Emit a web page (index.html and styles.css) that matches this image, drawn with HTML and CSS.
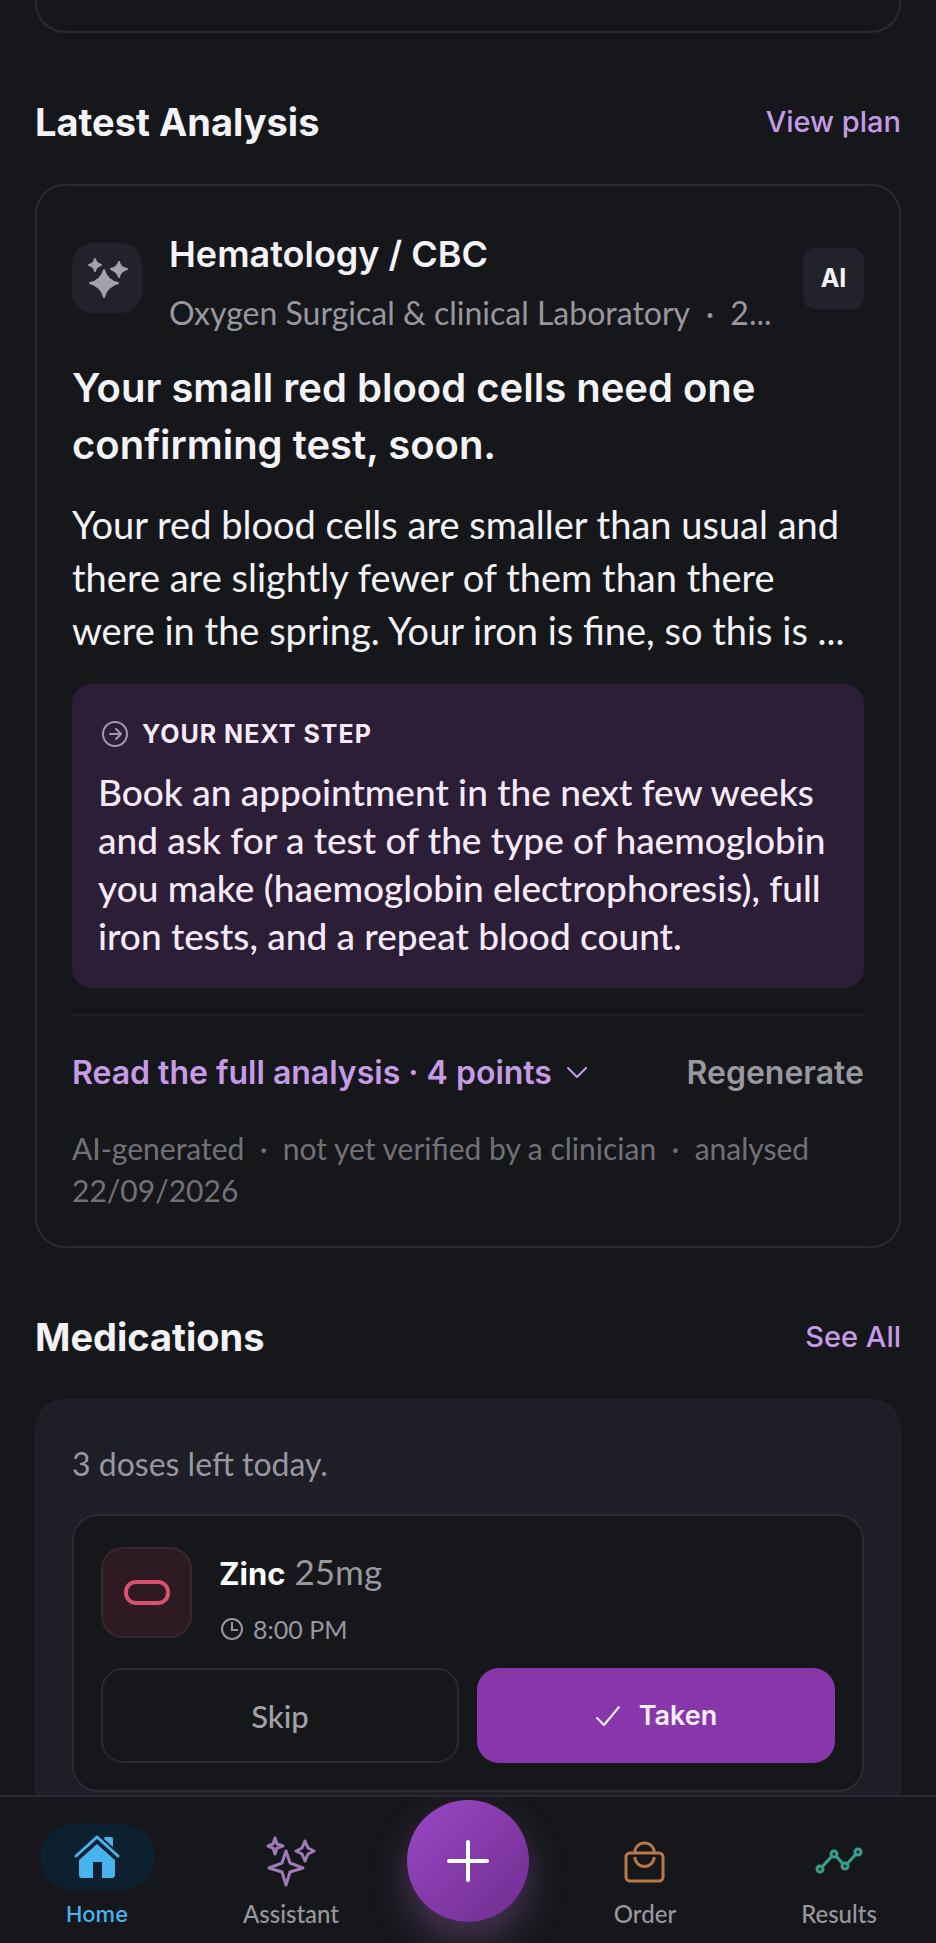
FILE: index.html
```html
<!DOCTYPE html>
<html lang="en">
<head>
    <meta charset="UTF-8">
    <meta name="viewport" content="width=device-width, initial-scale=1.0">
    <title>Home</title>
    <link rel="stylesheet" href="styles.css">
</head>
<body>

<main class="page">
    <div class="card card-end"></div>

    <div class="section-head">
        <h2>Latest Analysis</h2>
        <a href="#plan">View plan</a>
    </div>

    <article class="card">
        <div class="report-head">
            <div class="report-icon">
                <svg width="42" height="42" viewBox="0 0 42 42" fill="#a3a2ac" stroke="#a3a2ac" stroke-width="2" stroke-linejoin="round">
                    <path d="M18 13 Q21 24 32 26 Q21 29 18 40 Q15 29 4 26 Q15 24 18 13 Z"/>
                    <path d="M9 2 Q10 7 15 8 Q10 9 9 14 Q8 9 3 8 Q8 7 9 2 Z"/>
                    <path d="M33 5 Q34 11 41 12 Q34 14 33 20 Q31 14 25 12 Q31 11 33 5 Z"/>
                </svg>
            </div>
            <div class="report-title">
                <h3>Hematology / CBC</h3>
                <p>Oxygen Surgical &amp; clinical Laboratory &nbsp;·&nbsp; 2...</p>
            </div>
            <span class="ai-badge">AI</span>
        </div>

        <h4 class="headline">Your small red blood cells need one confirming test, soon.</h4>
        <p class="summary">Your red blood cells are smaller than usual and there are slightly fewer of them than there were in the spring. Your iron is fine, so this is ...</p>

        <div class="next-step">
            <div class="next-label">
                <svg width="34" height="34" viewBox="0 0 34 34" fill="none" stroke="#a893b3" stroke-width="2" stroke-linecap="round" stroke-linejoin="round">
                    <circle cx="17" cy="17" r="12"/>
                    <path d="M12 17 H22 M18 12 L23 17 L18 22"/>
                </svg>
                <span>YOUR NEXT STEP</span>
            </div>
            <p>Book an appointment in the next few weeks and ask for a test of the type of haemoglobin you make (haemoglobin electrophoresis), full iron tests, and a repeat blood count.</p>
        </div>

        <div class="report-actions">
            <button class="text-button">
                Read the full analysis · 4 points
                <svg width="22" height="14" viewBox="0 0 22 14" fill="none" stroke="currentColor" stroke-width="2" stroke-linecap="round" stroke-linejoin="round"><path d="M2 2 L11 11 L20 2"/></svg>
            </button>
            <button class="text-button muted">Regenerate</button>
        </div>
        <p class="footnote">AI-generated &nbsp;·&nbsp; not yet verified by a clinician &nbsp;·&nbsp; analysed 22/09/2026</p>
    </article>

    <div class="section-head">
        <h2>Medications</h2>
        <a href="#medications">See All</a>
    </div>

    <section class="card med-card">
        <p class="doses">3 doses left today.</p>
        <div class="dose">
            <div class="dose-info">
                <div class="pill-icon">
                    <svg width="46" height="26" viewBox="0 0 46 26" fill="none" stroke="#d9526f" stroke-width="4"><rect x="2" y="2" width="42" height="21" rx="10"/></svg>
                </div>
                <div class="dose-text">
                    <p class="dose-name"><strong>Zinc</strong> 25mg</p>
                    <p class="dose-time">
                        <svg width="26" height="26" viewBox="0 0 26 26" fill="none" stroke="currentColor" stroke-width="2"><circle cx="13" cy="13" r="10"/><path d="M13 6 V14 H19"/></svg>
                        8:00 PM
                    </p>
                </div>
            </div>
            <div class="dose-actions">
                <button class="skip">Skip</button>
                <button class="taken">
                    <svg width="26" height="22" viewBox="0 0 26 22" fill="none" stroke="currentColor" stroke-width="2" stroke-linecap="round" stroke-linejoin="round"><path d="M2 13 L9 20 L24 2"/></svg>
                    Taken
                </button>
            </div>
        </div>
    </section>
</main>

<nav class="tab-bar">
    <a href="#home" class="tab active">
        <span class="tab-icon">
            <svg width="48" height="46" viewBox="0 0 48 46">
                <path d="M31 5 a2 2 0 0 1 2-2 h5 a2 2 0 0 1 2 2 V18 L31 10 Z" fill="currentColor"/>
                <path d="M24 10 L42 26 V41 a3 3 0 0 1-3 3 H29 V28 H20 V44 H9 a3 3 0 0 1-3-3 V26 Z" fill="currentColor"/>
                <path d="M3 23 L24 4 L45 23" fill="none" stroke="#0d2030" stroke-width="8"/>
                <path d="M3 22 L24 3 L45 22" fill="none" stroke="currentColor" stroke-width="3" stroke-linecap="round" stroke-linejoin="round"/>
            </svg>
        </span>
        Home
    </a>
    <a href="#assistant" class="tab">
        <span class="tab-icon">
            <svg width="50" height="52" viewBox="0 0 50 52" fill="none" stroke="#a079b8" stroke-width="3" stroke-linejoin="round">
                <path d="M20 16 L24 28 L37 33 L24 37 L20 50 L16 37 L3 33 L16 28 Z"/>
                <path d="M9 3 L11 9 L17 11 L11 13 L9 19 L7 13 L2 11 L7 9 Z"/>
                <path d="M39 6 L42 13 L48 16 L42 19 L39 26 L36 19 L30 16 L36 13 Z"/>
            </svg>
        </span>
        Assistant
    </a>
    <button class="add" aria-label="Add">
        <svg width="44" height="44" viewBox="0 0 44 44" fill="none" stroke="#fff" stroke-width="4" stroke-linecap="round"><path d="M22 3 V41 M3 22 H41"/></svg>
    </button>
    <a href="#order" class="tab">
        <span class="tab-icon">
            <svg width="42" height="46" viewBox="0 0 42 46" fill="none" stroke="#b97a48" stroke-width="3">
                <rect x="2" y="15" width="37" height="28" rx="4"/>
                <path d="M11 15 V12 a10 10 0 0 1 19 0 V15 M11 19 V21 a10 11 0 0 0 19 0 V19"/>
            </svg>
        </span>
        Order
    </a>
    <a href="#results" class="tab">
        <span class="tab-icon">
            <svg width="48" height="30" viewBox="0 0 48 30" fill="none" stroke="#35a08c" stroke-width="3">
                <path d="M7 21 L17 10 M21 10 L28 18 M32 18 L41 8"/>
                <circle cx="5" cy="23" r="3"/><circle cx="19" cy="8" r="3"/><circle cx="30" cy="20" r="3"/><circle cx="43" cy="6" r="3"/>
            </svg>
        </span>
        Results
    </a>
</nav>

</body>
</html>
```

FILE: styles.css
```css
* {
    box-sizing: border-box;
}
body {
    margin: 0;
    background-color: #16171b;
    color: #f4f4f8;
    font-family: Lato, "Liberation Sans", sans-serif;
}
h2, h3, h4, p {
    margin: 0;
}
a {
    text-decoration: none;
}
button {
    border: none;
    padding: 0;
    background: none;
    cursor: pointer;
}
svg {
    flex-shrink: 0;
}
h2, h3, h4, button, .section-head a, .ai-badge, .next-label, strong {
    font-family: Inter, "Liberation Sans", sans-serif;
}
.page {
    padding: 0 35px;
}
.card {
    border: 2px solid #2a2b30;
    border-radius: 30px;
    padding: 35px;
}
/* Tail of the card that is scrolled off the top */
.card-end {
    height: 33px;
    padding: 0;
    border-top: none;
    border-radius: 0 0 30px 30px;
}
.section-head {
    display: flex;
    align-items: center;
    justify-content: space-between;
    margin: 63px 0 36px;
    line-height: 52px;
}
.section-head h2 {
    font-size: 38px;
    font-weight: 700;
}
.section-head a {
    font-size: 29px;
    font-weight: 500;
    color: #c69be6;
}

/* Analysis card */
.report-head {
    display: flex;
    align-items: center;
    gap: 27px;
}
.report-icon {
    display: flex;
    align-items: center;
    justify-content: center;
    width: 70px;
    height: 70px;
    border-radius: 21px;
    background-color: #22222b;
}
.report-title {
    flex: 1;
    display: flex;
    flex-direction: column;
    gap: 12px;
    padding-top: 8px;
    white-space: nowrap;
}
.report-title h3 {
    font-size: 36px;
    line-height: 50px;
    font-weight: 600;
}
.report-title p {
    font-size: 32px;
    line-height: 44px;
    color: #98989e;
}
.ai-badge {
    width: 61px;
    border-radius: 12px;
    background-color: #22222a;
    font-size: 25px;
    line-height: 61px;
    font-weight: 700;
    text-align: center;
}
.headline {
    margin-top: 24px;
    font-size: 40px;
    line-height: 57px;
    font-weight: 600;
}
.summary {
    margin-top: 25px;
    padding-right: 16px;
    font-size: 38px;
    line-height: 53px;
}
.next-step {
    margin-top: 27px;
    padding: 26px 26px 28px;
    border-radius: 20px;
    background-color: #2d1e37;
    color: #f7ebfb;
    font-size: 37px;
    line-height: 48px;
    font-weight: 500;
}
.next-label {
    display: flex;
    align-items: center;
    gap: 10px;
    margin-bottom: 10px;
    font-size: 25px;
    font-weight: 700;
    letter-spacing: 1px;
}
.report-actions {
    display: flex;
    justify-content: space-between;
    margin-top: 26px;
    padding-top: 35px;
    border-top: 2px solid #202126;
}
.text-button {
    display: flex;
    align-items: center;
    gap: 14px;
    font-size: 32px;
    line-height: 44px;
    font-weight: 600;
    color: #c69be6;
}
.muted {
    color: #98989e;
}
.footnote {
    margin-top: 32px;
    font-size: 30px;
    line-height: 42px;
    color: #717277;
}

/* Medications */
.med-card {
    background-color: #1e1e26;
    border-color: #212128;
}
.doses {
    font-size: 32px;
    line-height: 56px;
    color: #98989e;
}
.dose {
    margin-top: 22px;
    padding: 31px 27px 27px;
    border: 2px solid #2a2b32;
    border-radius: 26px;
    background-color: #16171b;
}
.dose-info {
    display: flex;
    gap: 27px;
    height: 91px;
}
.pill-icon {
    display: flex;
    align-items: center;
    justify-content: center;
    width: 91px;
    border: 2px solid #36292f;
    border-radius: 22px;
    background-color: #2d1a23;
}
.dose-text {
    display: flex;
    flex-direction: column;
    gap: 14px;
    color: #98989e;
}
.dose-name {
    font-size: 35px;
    line-height: 48px;
}
.dose-name strong {
    font-size: 31px;
    font-weight: 700;
    color: #ffffff;
}
.dose-time {
    display: flex;
    align-items: center;
    gap: 8px;
    font-size: 25px;
    line-height: 34px;
}
.dose-actions {
    display: grid;
    grid-template-columns: 1fr 1fr;
    gap: 18px;
    margin-top: 30px;
}
.dose-actions button {
    display: flex;
    align-items: center;
    justify-content: center;
    gap: 18px;
    height: 95px;
    border-radius: 22px;
    font-size: 29px;
}
.dose-actions .skip {
    border: 2px solid #2a2b30;
    font-family: Lato, "Liberation Sans", sans-serif;
    font-size: 31px;
    font-weight: 500;
    color: #a2a2a8;
}
.dose-actions .taken {
    background-color: #8737aa;
    font-size: 27px;
    font-weight: 600;
    color: #fdf0ff;
}

/* Bottom tab bar */
.tab-bar {
    position: fixed;
    left: 0;
    right: 0;
    bottom: 0;
    display: grid;
    grid-template-columns: 1fr 1fr 160px 1fr 1fr;
    height: 148px;
    border-top: 2px solid #2a2a31;
    background-color: #16171b;
    overflow: hidden;
}
.tab {
    display: flex;
    flex-direction: column;
    align-items: center;
    gap: 9px;
    padding-top: 27px;
    font-size: 24px;
    line-height: 30px;
    font-weight: 500;
    color: #98989e;
}
.tab-icon {
    display: flex;
    align-items: center;
    justify-content: center;
    width: 115px;
    height: 66px;
    padding-top: 8px;
    border-radius: 33px;
}
.active {
    font-family: Inter, "Liberation Sans", sans-serif;
    font-size: 22px;
    color: #45b4ef;
}
.active .tab-icon {
    padding-top: 0;
    background-color: #0d2030;
}
.add {
    display: flex;
    align-items: center;
    justify-content: center;
    justify-self: center;
    width: 122px;
    height: 122px;
    margin-top: 3px;
    border-radius: 50%;
    background-image: linear-gradient(135deg, #9a48c4, #702d90);
    box-shadow: 0 18px 36px rgba(160, 110, 190, 0.35);
}
```
